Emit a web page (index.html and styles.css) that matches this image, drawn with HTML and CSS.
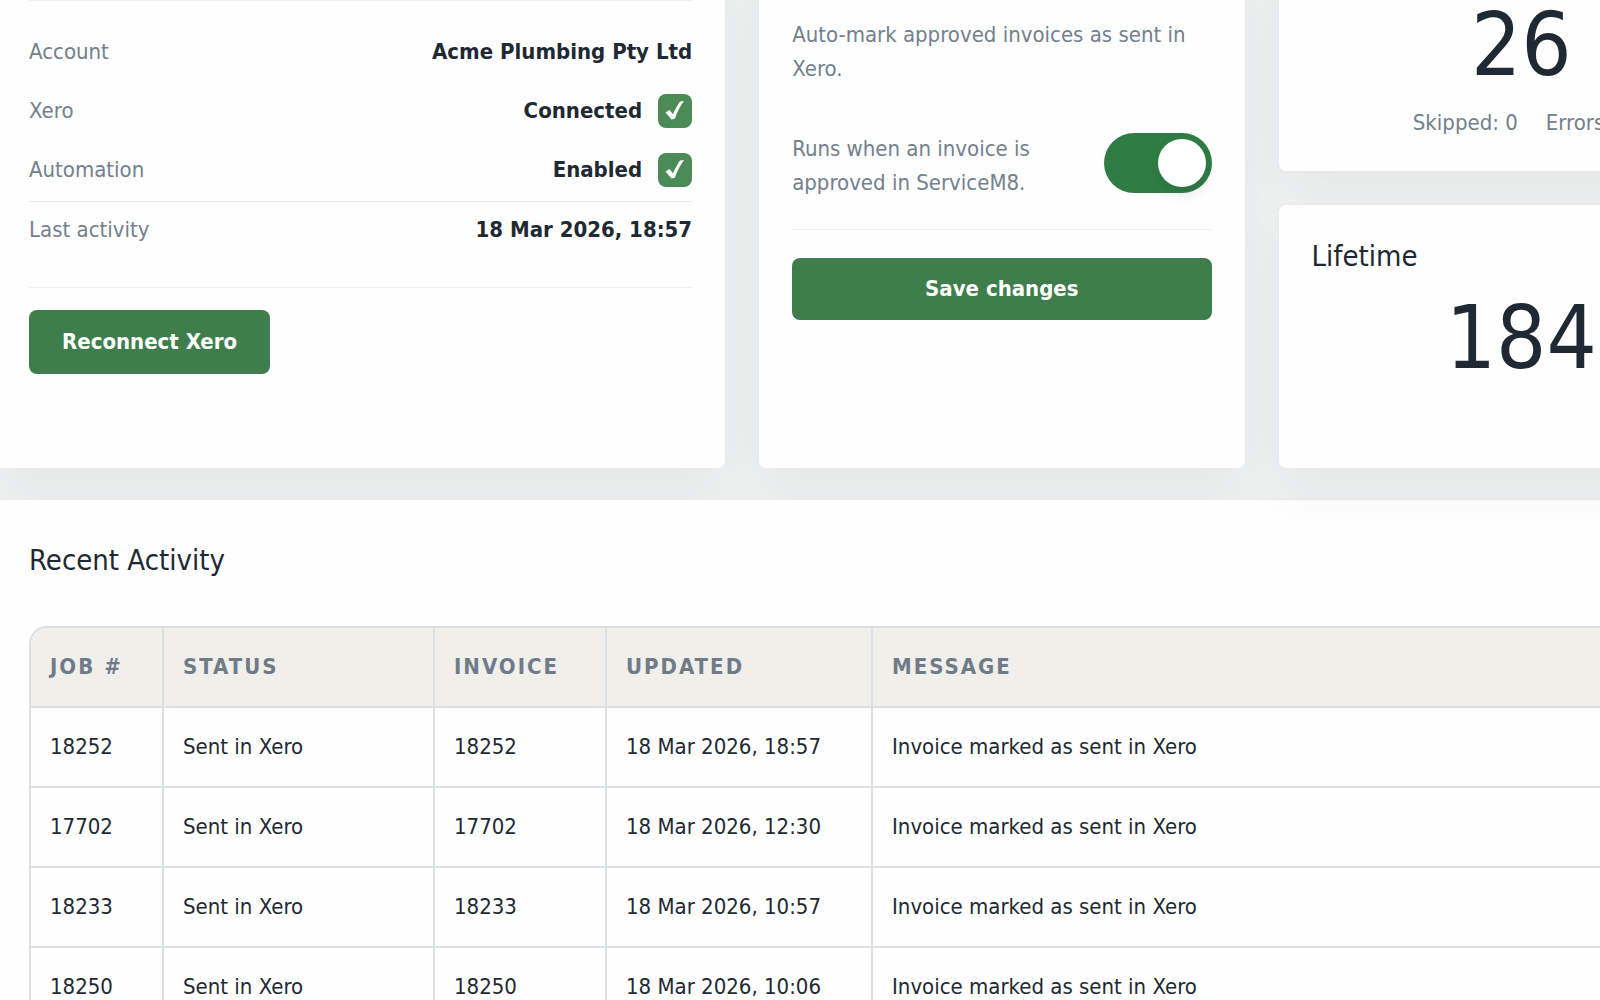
FILE: index.html
```html
<!DOCTYPE html>
<html lang="en">
<head>
  <meta charset="UTF-8">
  <title>Dashboard</title>
  <link rel="stylesheet" href="styles.css">
</head>
<body>
<main class="page">
  <div class="cards">

    <section class="card">
      <div class="status-list">
        <div class="row"><span class="label">Account</span><strong>Acme Plumbing Pty Ltd</strong></div>
        <div class="row">
          <span class="label">Xero</span>
          <strong>Connected
            <svg class="badge" viewBox="0 0 34 34"><rect width="34" height="34" rx="8"/><path d="M7.500 18.500L11.500 16L15 20.200C17 15.500 19.500 11 22 7.500L26 7C22 12.500 19 18.500 16.800 24.800L13.500 25.500z"/></svg>
          </strong>
        </div>
        <div class="row">
          <span class="label">Automation</span>
          <strong>Enabled
            <svg class="badge" viewBox="0 0 34 34"><rect width="34" height="34" rx="8"/><path d="M7.500 18.500L11.500 16L15 20.200C17 15.500 19.500 11 22 7.500L26 7C22 12.500 19 18.500 16.800 24.800L13.500 25.500z"/></svg>
          </strong>
        </div>
      </div>
      <div class="row last"><span class="label">Last activity</span><strong>18 Mar 2026, 18:57</strong></div>
      <div class="actions">
        <button class="btn" type="button">Reconnect Xero</button>
      </div>
    </section>

    <section class="card settings">
      <p class="label">Auto-mark approved invoices as sent in Xero.</p>
      <div class="toggle-row">
        <label class="label" for="autoSend">Runs when an invoice is approved in ServiceM8.</label>
        <input class="toggle" type="checkbox" id="autoSend" checked>
      </div>
      <div class="save">
        <button class="btn btn-full" type="button">Save changes</button>
      </div>
    </section>

    <div class="stats">
      <section class="card today">
        <div class="number">26</div>
        <p class="label counts"><span>Skipped: 0</span><span>Errors: 0</span></p>
      </section>
      <section class="card lifetime">
        <h2>Lifetime</h2>
        <div class="number">184</div>
      </section>
    </div>
  </div>

  <section class="card activity">
    <h2>Recent Activity</h2>
    <div class="table-wrap">
      <table>
        <colgroup>
          <col class="col-job"><col class="col-status"><col class="col-invoice"><col class="col-updated"><col>
        </colgroup>
        <thead>
          <tr><th>Job #</th><th>Status</th><th>Invoice</th><th>Updated</th><th>Message</th></tr>
        </thead>
        <tbody>
          <tr><td>18252</td><td>Sent in Xero</td><td>18252</td><td>18 Mar 2026, 18:57</td><td>Invoice marked as sent in Xero</td></tr>
          <tr><td>17702</td><td>Sent in Xero</td><td>17702</td><td>18 Mar 2026, 12:30</td><td>Invoice marked as sent in Xero</td></tr>
          <tr><td>18233</td><td>Sent in Xero</td><td>18233</td><td>18 Mar 2026, 10:57</td><td>Invoice marked as sent in Xero</td></tr>
          <tr><td>18250</td><td>Sent in Xero</td><td>18250</td><td>18 Mar 2026, 10:06</td><td>Invoice marked as sent in Xero</td></tr>
        </tbody>
      </table>
    </div>
  </section>
</main>
</body>
</html>
```
FILE: styles.css
```css
* {
  box-sizing: border-box;
}

html {
  overflow: hidden;
}

body {
  margin: 0;
  background-color: #f1f2f2;
  color: #1f2933;
  font-family: Tahoma, "DejaVu Sans Condensed", "DejaVu Sans", sans-serif;
  font-size: 22px;
  line-height: 34px;
}

h2, p {
  margin: 0;
}

h2 {
  font-size: 29px;
  font-weight: normal;
  line-height: 36px;
}

/* the page is wider than the window and runs off every side */
.page {
  margin: -34px -165px 0 -5px;
}

.cards {
  display: grid;
  grid-template-columns: 3fr 2fr 2fr;
  gap: 32px;
}

.card {
  background-color: #fefefe;
  border: 1px solid #e8eaeb;
  border-radius: 8px;
  padding: 33px;
  box-shadow: 0 18px 50px rgba(31, 41, 51, 0.06);
}

.label {
  color: #74808d;
}

.row {
  display: flex;
  justify-content: space-between;
  align-items: center;
  height: 34px;
}

.row strong {
  display: flex;
  align-items: center;
  gap: 16px;
}

.badge {
  width: 34px;
  height: 34px;
}

.badge rect {
  fill: #4c8a57;
}

.badge path {
  fill: #fff;
}

.status-list {
  display: flex;
  flex-direction: column;
  gap: 25px;
  border-top: 1px solid #eceeef;
  border-bottom: 1px solid #e6e8ea;
  padding: 34px 0 14px;
}

.last {
  margin: 11px 0 40px;
}

.actions {
  border-top: 1px solid #eceeef;
  padding-top: 22px;
}

.btn {
  height: 64px;
  padding: 0 33px;
  border: none;
  border-radius: 8px;
  background-color: #407d4d;
  color: #fff;
  font: inherit;
  font-weight: bold;
  cursor: pointer;
}

.btn-full {
  width: 100%;
  height: 62px;
}

.settings {
  padding-top: 51px;
}

.toggle-row {
  display: flex;
  justify-content: space-between;
  align-items: flex-start;
  gap: 60px;
  margin-top: 46px;
}

.toggle {
  appearance: none;
  flex: none;
  display: flex;
  justify-content: flex-end;
  width: 108px;
  height: 60px;
  margin: 1px 0 0;
  padding: 6px;
  border-radius: 30px;
  background-color: #2f7d45;
  cursor: pointer;
}

.toggle::before {
  content: "";
  width: 48px;
  height: 48px;
  border-radius: 50%;
  background-color: #fff;
  box-shadow: 0 6px 14px rgba(31, 41, 51, 0.14);
}

.save {
  margin-top: 29px;
  padding-top: 28px;
  border-top: 1px solid #eceeef;
}

.stats {
  display: flex;
  flex-direction: column;
  gap: 32px;
  position: relative;
  z-index: 1;
}

.number {
  font-size: 88px;
  line-height: 90px;
  text-align: center;
}

.counts {
  display: flex;
  justify-content: center;
  gap: 28px;
  margin-top: 16px;
}

.today {
  padding-bottom: 31px;
}

.lifetime {
  padding-bottom: 85px;
}

.lifetime .number {
  margin-top: 19px;
}

.activity {
  position: relative;
  margin-top: 30px;
}

.activity h2 {
  margin: 9px 0 48px;
}

.table-wrap {
  border: 2px solid #dcdfe2;
  border-radius: 18px;
  overflow: hidden;
}

table {
  width: 100%;
  table-layout: fixed;
  border-collapse: separate;
  border-spacing: 0;
}

.col-job {
  width: 133px;
}

.col-status {
  width: 271px;
}

.col-invoice {
  width: 172px;
}

.col-updated {
  width: 266px;
}

th, td {
  padding: 22px 19px;
  text-align: left;
  border-right: 2px solid #dcdfe2;
  border-bottom: 2px solid #dcdfe2;
}

th {
  background-color: #f0efea;
  color: #6f7b88;
  letter-spacing: 2px;
  text-transform: uppercase;
}
```
